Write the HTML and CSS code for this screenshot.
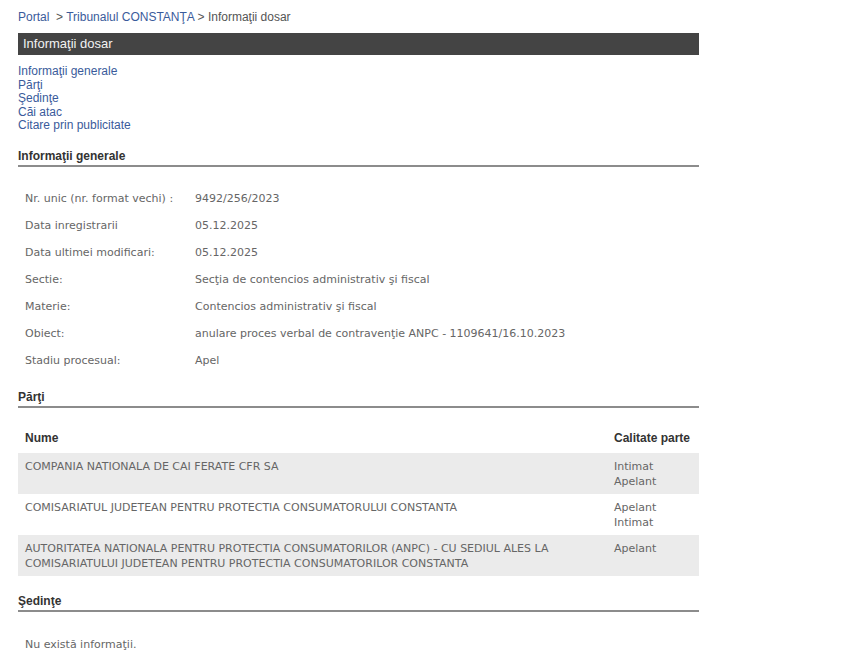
FILE: index.html
```html
<!DOCTYPE html>
<html lang="ro">
<head>
    <meta charset="UTF-8">
    <title>Informaţii dosar</title>
    <link rel="stylesheet" href="styles.css">
</head>
<body>
    <div class="page">
        <div class="breadcrumb">
            <a href="#">Portal</a>&nbsp; &gt; <a href="#">Tribunalul CONSTANŢA</a> &gt; Informaţii dosar
        </div>
        <div class="title-bar">Informaţii dosar</div>

        <div class="nav">
            <a href="#general">Informaţii generale</a>
            <a href="#parti">Părţi</a>
            <a href="#sedinte">Şedinţe</a>
            <a href="#cai">Căi atac</a>
            <a href="#citare">Citare prin publicitate</a>
        </div>

        <h2 class="section-title" id="general">Informaţii generale</h2>
        <div class="info">
            <div class="info-row"><span class="label">Nr. unic (nr. format vechi) :</span><span>9492/256/2023</span></div>
            <div class="info-row"><span class="label">Data inregistrarii</span><span>05.12.2025</span></div>
            <div class="info-row"><span class="label">Data ultimei modificari:</span><span>05.12.2025</span></div>
            <div class="info-row"><span class="label">Sectie:</span><span>Secţia de contencios administrativ şi fiscal</span></div>
            <div class="info-row"><span class="label">Materie:</span><span>Contencios administrativ şi fiscal</span></div>
            <div class="info-row"><span class="label">Obiect:</span><span>anulare proces verbal de contravenţie ANPC - 1109641/16.10.2023</span></div>
            <div class="info-row"><span class="label">Stadiu procesual:</span><span>Apel</span></div>
        </div>

        <h2 class="section-title" id="parti">Părţi</h2>
        <div class="parties">
            <div class="parties-head">
                <span>Nume</span>
                <span>Calitate parte</span>
            </div>
            <div class="party">
                <span>COMPANIA NATIONALA DE CAI FERATE CFR SA</span>
                <span>Intimat<br>Apelant</span>
            </div>
            <div class="party">
                <span>COMISARIATUL JUDETEAN PENTRU PROTECTIA CONSUMATORULUI CONSTANTA</span>
                <span>Apelant<br>Intimat</span>
            </div>
            <div class="party">
                <span>AUTORITATEA NATIONALA PENTRU PROTECTIA CONSUMATORILOR (ANPC) - CU SEDIUL ALES LA COMISARIATULUI JUDETEAN PENTRU PROTECTIA CONSUMATORILOR CONSTANTA</span>
                <span>Apelant</span>
            </div>
        </div>

        <h2 class="section-title sedinte" id="sedinte">Şedinţe</h2>
        <p class="empty">Nu există informaţii.</p>
    </div>
</body>
</html>
```

FILE: styles.css
```css
body {
    margin: 0;
    background-color: #fff;
    font-family: "Liberation Sans", Arial, sans-serif;
    font-size: 12px;
    color: #333;
}
a {
    color: #3a5b9b;
    text-decoration: none;
}
.page {
    width: 681px;
    padding-left: 18px;
}
.breadcrumb {
    padding-top: 10px;
    line-height: 14px;
    color: #555;
}
.title-bar {
    margin-top: 9px;
    height: 22px;
    line-height: 22px;
    padding-left: 5px;
    background-color: #444;
    color: #f2f2f2;
    font-size: 13px;
}
.nav {
    margin-top: 10px;
    display: flex;
    flex-direction: column;
    line-height: 13.5px;
}
.section-title {
    margin: 16px 0 0;
    padding-bottom: 2px;
    font-size: 12px;
    line-height: 14px;
    font-weight: bold;
    color: #333;
    border-bottom: 2px solid #8c8c8c;
}
.section-title.sedinte {
    margin-top: 18px;
}
.info {
    margin-top: 18px;
    font-family: "DejaVu Sans", sans-serif;
    font-size: 11px;
    color: #666;
}
.info-row {
    display: grid;
    grid-template-columns: 170px 1fr;
    height: 27px;
    align-items: center;
    padding-left: 7px;
}
.parties {
    margin-top: 15px;
    font-family: "DejaVu Sans", sans-serif;
    font-size: 11px;
    color: #666;
}
.parties-head,
.party {
    display: grid;
    grid-template-columns: 589px 1fr;
}
.parties-head {
    height: 30px;
    align-items: center;
    font-family: "Liberation Sans", Arial, sans-serif;
    font-size: 12px;
    font-weight: bold;
    color: #333;
}
.parties-head span,
.party span {
    padding-left: 7px;
}
.party {
    padding: 6px 0 5px;
    line-height: 15px;
    min-height: 30px;
}
.party:nth-child(even) {
    background-color: #ebebeb;
}
.party span:first-child {
    padding-right: 40px;
}
.empty {
    margin: 26px 0 0;
    padding-left: 7px;
    font-family: "DejaVu Sans", sans-serif;
    font-size: 11px;
    line-height: 14px;
    color: #666;
}
```
